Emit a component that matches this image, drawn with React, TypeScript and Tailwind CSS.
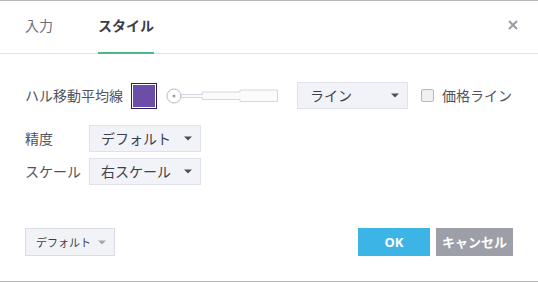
import React from "react";

const Caret = ({ color = "#4a4e59" }: { color?: string }) => (
  <svg width="8" height="5" viewBox="0 0 8 5" className="shrink-0">
    <path d="M0 0.5 L8 0.5 L4 4.5 Z" fill={color} />
  </svg>
);

const Select = ({ label, width, pl = "pl-[11px]" }: { label: string; width: string; pl?: string }) => (
  <div
    className={`flex items-center justify-between h-[27px] ${width} ${pl} pr-[8px] bg-[#f1f3f8] border border-[#dfe2ea] text-[14px] leading-none text-[#3d404a]`}
  >
    <span>{label}</span>
    <Caret />
  </div>
);

export default function App() {
  return (
    <div
      className="w-[538px] h-[282px] bg-white flex flex-col border-t border-b border-[#b7b7b7]"
      style={{ fontFamily: "'Noto Sans', 'Noto Sans CJK JP', sans-serif" }}
    >
      {/* header */}
      <div className="relative h-[53px] shrink-0 flex items-stretch border-b border-[#e1e3e8] pl-[25px]">
        <div className="flex items-center text-[14px] leading-none text-[#6c6f78] pb-[2px]">入力</div>
        <div className="relative flex items-center ml-[45px] text-[14px] leading-none font-bold text-[#3a3d47] pb-[2px]">
          スタイル
          <div className="absolute left-0 right-0 bottom-[-1px] h-[2px] bg-[#4fb887]" />
        </div>
        <div className="absolute right-[20px] top-[19px]">
          <svg width="10" height="10" viewBox="0 0 10 10">
            <path d="M1 1 L9 9 M9 1 L1 9" stroke="#9a9da6" strokeWidth="2" />
          </svg>
        </div>
      </div>

      {/* body */}
      <div className="pt-[28px] pl-[25px] flex flex-col text-[14px] leading-none text-[#50535e]">
        <div className="flex items-center h-[27px]">
          <span className="w-[106px]">ハル移動平均線</span>
          <div className="w-[26px] h-[26px] border border-[#2a1f63] p-px bg-white">
            <div className="w-full h-full bg-[#6a4ea7]" />
          </div>
          <svg width="113" height="16" viewBox="0 0 113 16" className="ml-[9px]">
            <path
              d="M14 6.5 H36.5 V4 H74 V2 H111.5 V13.5 H74 V11.5 H36.5 V9.5 H14 Z"
              fill="#fafbfc"
              stroke="#d4d7de"
              strokeWidth="1"
            />
            <circle cx="8" cy="8" r="7" fill="white" stroke="#b8bbc4" strokeWidth="1" />
            <circle cx="8" cy="8" r="1.5" fill="#9da0a9" />
          </svg>
          <div className="ml-[18px]">
            <Select label="ライン" width="w-[111px]" pl="pl-[12px]" />
          </div>
          <div className="ml-[13px] w-[13px] h-[13px] rounded-[2px] border border-[#b5b8c1] bg-[#eef0f4]" />
          <span className="ml-[8px]">価格ライン</span>
        </div>

        <div className="flex items-center h-[27px] mt-[16px]">
          <span className="w-[64px]">精度</span>
          <Select label="デフォルト" width="w-[112px]" />
        </div>

        <div className="flex items-center h-[27px] mt-[6px]">
          <span className="w-[64px]">スケール</span>
          <Select label="右スケール" width="w-[112px]" />
        </div>
      </div>

      {/* footer */}
      <div className="mt-[43px] px-[25px] flex items-center justify-between">
        <div className="flex items-center justify-between h-[28px] w-[90px] pl-[10px] pr-[8px] bg-[#f1f3f6] border border-[#d9dce3] text-[11px] leading-none text-[#3d404a]">
          <span>デフォルト</span>
          <Caret color="#a3a6ae" />
        </div>
        <div className="flex items-center gap-[6px]">
          <div className="flex items-center justify-center w-[72px] h-[28px] bg-[#3cb4e6] text-white text-[13px] font-bold leading-none">
            OK
          </div>
          <div className="flex items-center justify-center w-[77px] h-[28px] bg-[#9c9fa7] text-white text-[13px] font-bold leading-none">
            キャンセル
          </div>
        </div>
      </div>
    </div>
  );
}
